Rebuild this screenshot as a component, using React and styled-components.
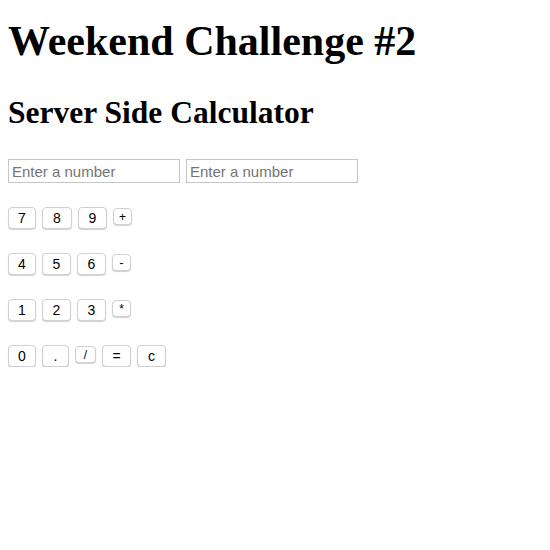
import React from 'react';
import styled, { createGlobalStyle } from 'styled-components';

const GlobalStyle = createGlobalStyle`
	body {
		margin: 0;
		background: #fff;
		font-family: "Liberation Serif", "Times New Roman", serif;
	}
`;

const Page = styled.div`
	padding: 0 8px;
`;

const Title = styled.h1`
	margin: 17px 0 0 0;
	font-size: 42px;
	line-height: 48px;
	font-weight: bold;
	color: #000;
`;

const Subtitle = styled.h2`
	margin: 30px 0 0 0;
	font-size: 31.5px;
	line-height: 36px;
	font-weight: bold;
	color: #000;
`;

const Inputs = styled.div`
	display: flex;
	gap: 6px;
	margin-top: 28px;
`;

const NumberInput = styled.input`
	box-sizing: border-box;
	width: 172px;
	height: 24px;
	margin: 0;
	padding: 0 3px;
	border: 1px solid #c6c6c6;
	border-radius: 0;
	font-family: "Liberation Sans", Arial, sans-serif;
	font-size: 15px;
	color: #000;
	outline: none;

	&::placeholder {
		color: #757575;
	}
`;

const Keypad = styled.div`
	display: flex;
	flex-direction: column;
	gap: 24px;
	margin-top: 24px;
`;

const KeyRow = styled.div`
	display: flex;
	align-items: flex-start;
	gap: 6px;
`;

const Key = styled.button`
	box-sizing: border-box;
	width: ${props => props.$w}px;
	height: ${props => props.$small ? 17 : 22}px;
	margin-top: ${props => props.$small ? 1 : 0}px;
	padding: 0;
	display: flex;
	align-items: center;
	justify-content: center;
	background: #fff;
	border: 1px solid #d0d0d0;
	border-radius: 4px;
	box-shadow: 0 1px 1px rgba(0, 0, 0, 0.18);
	font-family: "Liberation Sans", Arial, sans-serif;
	font-size: ${props => props.$small ? 12 : 14}px;
	color: #000;
	cursor: pointer;
`;

const rows = [
	[['7', 28], ['8', 30], ['9', 29], ['+', 19, true]],
	[['4', 28], ['5', 29], ['6', 29], ['-', 19, true]],
	[['1', 28], ['2', 29], ['3', 29], ['*', 19, true]],
	[['0', 28], ['.', 27], ['/', 21, true], ['=', 29], ['c', 29]],
];

const App = () => (
	<Page>
		<GlobalStyle />
		<Title>Weekend Challenge #2</Title>
		<Subtitle>Server Side Calculator</Subtitle>
		<Inputs>
			<NumberInput type="text" placeholder="Enter a number" />
			<NumberInput type="text" placeholder="Enter a number" />
		</Inputs>
		<Keypad>
			{rows.map((row, i) => (
				<KeyRow key={i}>
					{row.map(([label, w, small]) => (
						<Key key={label} $w={w} $small={small}>{label}</Key>
					))}
				</KeyRow>
			))}
		</Keypad>
	</Page>
);

export default App;
